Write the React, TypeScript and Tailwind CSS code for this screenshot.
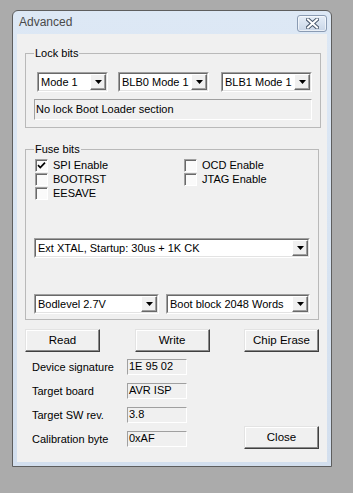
import React from "react";

const font = "font-['Liberation_Sans',Arial,sans-serif]";

function Arrow() {
  return (
    <div className="flex w-[16px] shrink-0 items-center justify-center border border-t-white border-l-white border-b-[#696969] border-r-[#696969] bg-[#f0f0f0] shadow-[inset_-1px_-1px_0_#a0a0a0]">
      <svg width="7" height="4" viewBox="0 0 7 4">
        <path d="M0 0H7L3.5 4Z" fill="#000" />
      </svg>
    </div>
  );
}

function Combo({ label, className }: { label: string; className?: string }) {
  return (
    <div
      className={`flex h-[20px] border border-t-[#a0a0a0] border-l-[#a0a0a0] border-b-white border-r-white ${className ?? ""}`}
    >
      <div className="flex flex-1 border border-t-[#696969] border-l-[#696969] border-b-[#e3e3e3] border-r-[#e3e3e3] bg-white">
        <span className="flex-1 truncate pl-[2px] leading-[16px]">{label}</span>
        <Arrow />
      </div>
    </div>
  );
}

function Check({ label, checked }: { label: string; checked?: boolean }) {
  return (
    <div className="flex h-[14px] items-center">
      <div className="ml-[1px] flex h-[13px] w-[13px] items-center justify-center border border-t-[#a0a0a0] border-l-[#a0a0a0] border-b-white border-r-white bg-[#fafafa] shadow-[inset_1px_1px_0_#696969]">
        {checked && (
          <svg width="9" height="9" viewBox="0 0 9 9">
            <path d="M1 4.2L3.3 6.5L8 1.6" fill="none" stroke="#000" strokeWidth="1.7" />
          </svg>
        )}
      </div>
      <span className="ml-[5px] leading-[14px]">{label}</span>
    </div>
  );
}

function Button({ label }: { label: string }) {
  return (
    <button className="h-[23px] w-[75px] border border-t-[#e3e3e3] border-l-[#e3e3e3] border-b-[#404040] border-r-[#404040] bg-[#f0f0f0] text-[11.5px] shadow-[inset_-1px_-1px_0_#8a8a8a,inset_1px_1px_0_#ffffff]">
      {label}
    </button>
  );
}

function Field({ value, className }: { value: string; className?: string }) {
  return (
    <div
      className={`border border-t-[#a0a0a0] border-l-[#a0a0a0] border-b-white border-r-white bg-[#f0f0f0] pl-[1px] ${className ?? ""}`}
    >
      {value}
    </div>
  );
}

const info = [
  ["Device signature", "1E 95 02"],
  ["Target board", "AVR ISP"],
  ["Target SW rev.", "3.8"],
  ["Calibration byte", "0xAF"],
];

export default function App() {
  return (
    <div className={`min-h-screen bg-[#ababab] pl-[12px] pt-[10px] text-[11px] text-black ${font}`}>
      {/* window */}
      <div className="flex h-[457px] w-[320px] flex-col rounded-t-[6px] border border-[#5e5e5e] bg-gradient-to-b from-[#dde8f5] via-[#d8e4f2] to-[#d3dfee]">
        {/* title bar */}
        <div className="flex h-[23px] shrink-0 items-start justify-between pl-[6px] pr-[4px]">
          <span className="mt-[4px] text-[12px] leading-[15px] text-[#4a4a4a]">Advanced</span>
          <div className="mt-[4px] flex h-[17px] w-[30px] items-center justify-center rounded-[3px] border border-[#8a9bb3] bg-gradient-to-b from-[#e6eef8] to-[#c9d6e7] shadow-[inset_0_0_0_1px_rgba(255,255,255,0.6)]">
            <svg width="13" height="11" viewBox="0 0 13 11">
              <path d="M2 1.5L11 9.5M11 1.5L2 9.5" stroke="#4b5a6e" strokeWidth="4" strokeLinecap="square" />
              <path d="M2 1.5L11 9.5M11 1.5L2 9.5" stroke="#ffffff" strokeWidth="2" strokeLinecap="square" />
            </svg>
          </div>
        </div>

        {/* client area */}
        <div className="mx-[4px] mb-[4px] flex flex-1 flex-col bg-[#f0f0f0] px-[8px]">
          {/* Lock bits */}
          <fieldset className="mt-[13px] border border-[#b9b9b9] px-[8px] pb-[7px]">
            <legend className="px-[1px] leading-[13px]">Lock bits</legend>
            <div className="mt-[12px] flex pl-[3px]">
              <Combo label="Mode 1" className="w-[71px]" />
              <Combo label="BLB0 Mode 1" className="ml-[10px] w-[91px]" />
              <Combo label="BLB1 Mode 1" className="ml-[12px] w-[91px]" />
            </div>
            <Field value="No lock Boot Loader section" className="mt-[7px] h-[21px] leading-[18px]" />
          </fieldset>

          {/* Fuse bits */}
          <fieldset className="mt-[15px] border border-[#b9b9b9] px-[8px] pb-[5px]">
            <legend className="px-[1px] leading-[13px]">Fuse bits</legend>
            <div className="mt-[2px] flex">
              <div className="w-[149px]">
                <Check label="SPI Enable" checked />
                <Check label="BOOTRST" />
                <Check label="EESAVE" />
              </div>
              <div>
                <Check label="OCD Enable" />
                <Check label="JTAG Enable" />
              </div>
            </div>
            <Combo label="Ext XTAL, Startup: 30us + 1K CK" className="mt-[38px]" />
            <div className="mt-[36px] flex">
              <Combo label="Bodlevel 2.7V" className="w-[125px]" />
              <Combo label="Boot block 2048 Words" className="ml-[7px] flex-1" />
            </div>
          </fieldset>

          {/* buttons */}
          <div className="mt-[9px] flex justify-between">
            <Button label="Read" />
            <Button label="Write" />
            <Button label="Chip Erase" />
          </div>

          {/* info */}
          <div className="mt-[7px] flex items-end justify-between">
            <div className="flex flex-col gap-[8px] pl-[7px]">
              {info.map(([label, value]) => (
                <div key={label} className="flex h-[16px] items-center">
                  <span className="w-[95px]">{label}</span>
                  <Field value={value} className="h-[16px] w-[60px] leading-[13px]" />
                </div>
              ))}
            </div>
            <div className="mb-[-2px]">
              <Button label="Close" />
            </div>
          </div>
        </div>
      </div>
    </div>
  );
}
